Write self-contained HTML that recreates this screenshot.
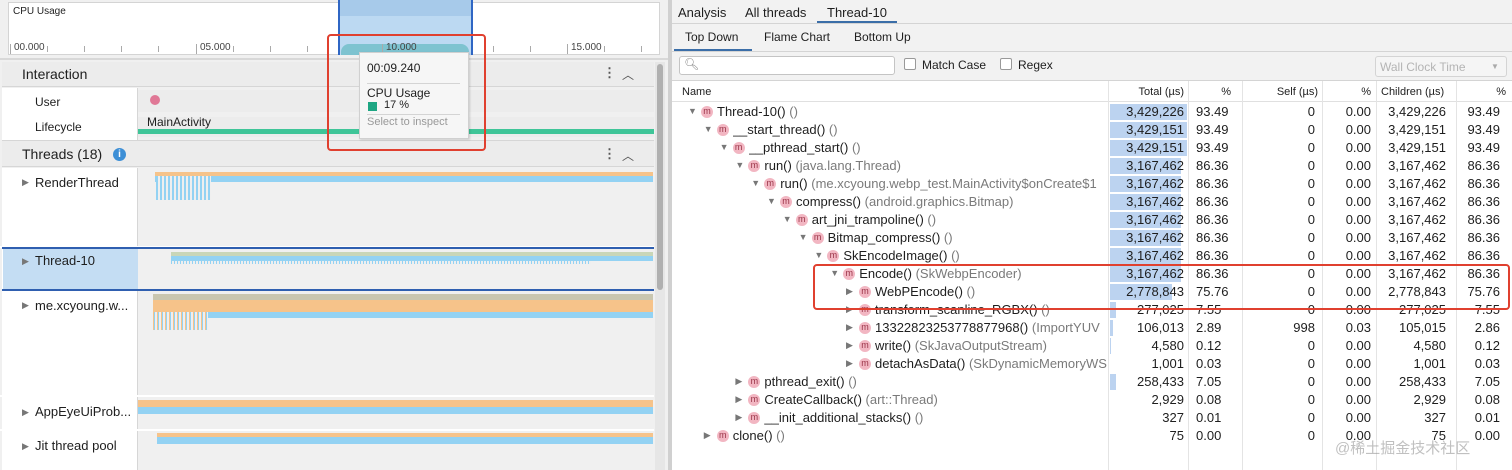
<!DOCTYPE html>
<html><head><meta charset="utf-8"><style>
*{margin:0;padding:0;box-sizing:border-box}
body{width:1512px;height:470px;overflow:hidden;background:#f2f2f2;font-family:"Liberation Sans",Arial,sans-serif;font-size:13px;color:#1e1e1e;position:relative}
.a{position:absolute}
.t{position:absolute;white-space:nowrap}
.r{position:absolute;white-space:nowrap;text-align:right}
.m{position:absolute;width:12px;height:12px;border-radius:50%;background:#f2b6c2;color:#9a3448;font-size:9px;line-height:11px;text-align:center}
.ar{position:absolute;font-size:9px;color:#777}
.g{color:#7a7a7a}
.tl{position:absolute;width:1px;height:6px;background:#aaa;top:46px}
</style></head><body>

<div class="a" style="left:0;top:0;width:668px;height:470px;background:#f0f0f0"></div>
<div class="a" style="left:8px;top:2px;width:652px;height:53px;background:#fff;border:1px solid #d4d4d4"></div>
<div class="t" style="left:13px;top:6px;font-size:10px">CPU Usage</div>
<div class="a" style="left:338px;top:0;width:135px;height:55px;background:#bcd9f2"></div>
<div class="a" style="left:338px;top:0;width:135px;height:16px;background:#a7caea"></div>
<div class="a" style="left:338px;top:0;width:2px;height:55px;background:#2f66c4"></div>
<div class="a" style="left:471px;top:0;width:2px;height:55px;background:#2f66c4"></div>
<div class="a" style="left:341px;top:44px;width:128px;height:11px;background:#7ec3d0;border-radius:8px 8px 0 0"></div>
<div class="t" style="left:14px;top:42px;font-size:10px;color:#444">00.000</div>
<div class="t" style="left:200px;top:42px;font-size:10px;color:#444">05.000</div>
<div class="t" style="left:386px;top:42px;font-size:10px;color:#444">10.000</div>
<div class="t" style="left:571px;top:42px;font-size:10px;color:#444">15.000</div>
<div class="tl" style="left:10px;height:10px;top:44px"></div><div class="tl" style="left:47px"></div><div class="tl" style="left:84px"></div><div class="tl" style="left:121px"></div><div class="tl" style="left:158px"></div><div class="tl" style="left:196px;height:10px;top:44px"></div><div class="tl" style="left:233px"></div><div class="tl" style="left:270px"></div><div class="tl" style="left:307px"></div><div class="tl" style="left:382px;height:10px;top:44px"></div><div class="tl" style="left:493px"></div><div class="tl" style="left:530px"></div><div class="tl" style="left:567px;height:10px;top:44px"></div><div class="tl" style="left:604px"></div><div class="tl" style="left:641px"></div>
<div class="a" style="left:0;top:58px;width:668px;height:2px;background:#d8d8d8"></div>

<div class="a" style="left:2px;top:62px;width:652px;height:25px;background:#ececec;border-bottom:1px solid #d6d6d6"></div>
<div class="t" style="left:22px;top:66px;font-size:14px">Interaction</div>
<div class="t" style="left:603px;top:65px;font-size:13px;font-weight:bold;color:#555">⋮</div>
<div class="t" style="left:622px;top:66px;font-size:12px;color:#555">︿</div>
<div class="a" style="left:2px;top:88px;width:136px;height:52px;background:#fff"></div>
<div class="a" style="left:137px;top:88px;width:1px;height:52px;background:#d6d6d6"></div>
<div class="a" style="left:138px;top:90px;width:516px;height:22px;background:#ececec"></div>
<div class="a" style="left:138px;top:117px;width:516px;height:20px;background:#ececec"></div>
<div class="t" style="left:35px;top:95px;font-size:12px">User</div>
<div class="t" style="left:35px;top:120px;font-size:12px">Lifecycle</div>
<div class="a" style="left:150px;top:95px;width:10px;height:10px;border-radius:50%;background:#e07896"></div>
<div class="t" style="left:147px;top:115px;font-size:12px">MainActivity</div>
<div class="a" style="left:138px;top:129px;width:516px;height:5px;background:#3fc598"></div>
<div class="a" style="left:2px;top:140px;width:652px;height:1px;background:#d6d6d6"></div>

<div class="a" style="left:2px;top:141px;width:652px;height:26px;background:#ececec;border-bottom:1px solid #d6d6d6"></div>
<div class="t" style="left:22px;top:146px;font-size:14px">Threads (18)</div>
<div class="a" style="left:113px;top:148px;width:13px;height:13px;border-radius:50%;background:#3d8fd6;color:#fff;font-size:10px;font-weight:bold;text-align:center;line-height:13px">i</div>
<div class="t" style="left:603px;top:146px;font-size:13px;font-weight:bold;color:#555">⋮</div>
<div class="t" style="left:622px;top:147px;font-size:12px;color:#555">︿</div>
<div class="a" style="left:2px;top:168px;width:136px;height:302px;background:#fff"></div>
<div class="a" style="left:137px;top:168px;width:1px;height:302px;background:#d6d6d6"></div>

<div class="ar" style="left:22px;top:177px">▶</div><div class="t" style="left:35px;top:175px">RenderThread</div>
<div class="a" style="left:155px;top:172px;width:498px;height:4px;background:#f6c38a"></div>
<div class="a" style="left:155px;top:176px;width:498px;height:6px;background:#93d2f3"></div>
<div class="a" style="left:156px;top:176px;width:55px;height:24px;background:repeating-linear-gradient(90deg,#93d2f3 0 2px,#efefef 2px 4px)"></div>
<div class="a" style="left:0;top:246px;width:654px;height:2px;background:#fff"></div>
<div class="a" style="left:2px;top:247px;width:652px;height:44px;border-top:2px solid #2f5fb0;border-bottom:2px solid #2f5fb0"></div>
<div class="a" style="left:3px;top:249px;width:135px;height:40px;background:#c4ddf3"></div>
<div class="ar" style="left:22px;top:256px">▶</div><div class="t" style="left:35px;top:253px">Thread-10</div>
<div class="a" style="left:171px;top:252px;width:482px;height:4px;background:#c9d6b8"></div>
<div class="a" style="left:171px;top:256px;width:482px;height:5px;background:#93d2f3"></div>
<div class="a" style="left:171px;top:261px;width:420px;height:3px;background:repeating-linear-gradient(90deg,#93d2f3 0 1px,#efefef 1px 3px)"></div>
<div class="ar" style="left:22px;top:300px">▶</div><div class="t" style="left:35px;top:298px">me.xcyoung.w...</div>
<div class="a" style="left:153px;top:294px;width:500px;height:6px;background:#c9c6b0"></div>
<div class="a" style="left:153px;top:300px;width:500px;height:12px;background:#f6c38a"></div>
<div class="a" style="left:153px;top:312px;width:500px;height:6px;background:#93d2f3"></div>
<div class="a" style="left:153px;top:312px;width:55px;height:18px;background:repeating-linear-gradient(90deg,#f6c38a 0 1px,#93d2f3 1px 2px,#efefef 2px 4px)"></div>
<div class="a" style="left:0;top:395px;width:654px;height:2px;background:#fff"></div>
<div class="ar" style="left:22px;top:407px">▶</div><div class="t" style="left:35px;top:404px">AppEyeUiProb...</div>
<div class="a" style="left:138px;top:400px;width:515px;height:7px;background:#f6c38a"></div>
<div class="a" style="left:138px;top:407px;width:515px;height:7px;background:#93d2f3"></div>
<div class="a" style="left:0;top:429px;width:654px;height:2px;background:#fff"></div>
<div class="ar" style="left:22px;top:441px">▶</div><div class="t" style="left:35px;top:438px">Jit thread pool</div>
<div class="a" style="left:157px;top:433px;width:496px;height:4px;background:#f6c38a"></div>
<div class="a" style="left:157px;top:437px;width:496px;height:7px;background:#93d2f3"></div>

<div class="a" style="left:655px;top:62px;width:10px;height:408px;background:#e6e6e6"></div>
<div class="a" style="left:657px;top:64px;width:6px;height:226px;background:#b0b0b0;border-radius:3px"></div>

<div class="a" style="left:359px;top:52px;width:110px;height:87px;background:#f6f6f6;border:1px solid #d0d0d0;box-shadow:1px 1px 2px rgba(0,0,0,.15)"></div>
<div class="t" style="left:367px;top:61px;font-size:12px">00:09.240</div>
<div class="a" style="left:367px;top:83px;width:93px;height:1px;background:#d4d4d4"></div>
<div class="t" style="left:367px;top:86px;font-size:12px">CPU Usage</div>
<div class="a" style="left:368px;top:102px;width:9px;height:9px;background:#1ea683"></div>
<div class="t" style="left:384px;top:99px;font-size:11px">17 %</div>
<div class="a" style="left:367px;top:114px;width:93px;height:1px;background:#d4d4d4"></div>
<div class="t" style="left:367px;top:116px;font-size:11px;color:#999">Select to inspect</div>
<div class="a" style="left:327px;top:34px;width:159px;height:117px;border:2px solid #e0402f;border-radius:4px"></div>

<div class="a" style="left:668px;top:0;width:4px;height:470px;background:#d0d0d0"></div>

<div class="a" style="left:672px;top:0;width:840px;height:470px;background:#f2f2f2"></div>
<div class="t" style="left:678px;top:5px;font-size:13px">Analysis</div>
<div class="t" style="left:745px;top:5px;font-size:13px">All threads</div>
<div class="t" style="left:827px;top:5px;font-size:13px">Thread-10</div>
<div class="a" style="left:817px;top:21px;width:80px;height:2px;background:#3b6ea8"></div>
<div class="a" style="left:672px;top:23px;width:840px;height:1px;background:#d4d4d4"></div>
<div class="t" style="left:685px;top:30px;font-size:12px">Top Down</div>
<div class="t" style="left:764px;top:30px;font-size:12px">Flame Chart</div>
<div class="t" style="left:854px;top:30px;font-size:12px">Bottom Up</div>
<div class="a" style="left:674px;top:49px;width:78px;height:2px;background:#3b6ea8"></div>
<div class="a" style="left:672px;top:51px;width:840px;height:1px;background:#d4d4d4"></div>
<div class="a" style="left:679px;top:56px;width:216px;height:19px;background:#fff;border:1px solid #c4c4c4;border-radius:3px"></div>
<div class="t" style="left:684px;top:57px;font-size:12px;color:#888">🔍︎</div>
<div class="a" style="left:904px;top:58px;width:12px;height:12px;background:#fff;border:1px solid #999;border-radius:2px"></div>
<div class="t" style="left:922px;top:58px;font-size:12px">Match Case</div>
<div class="a" style="left:1000px;top:58px;width:12px;height:12px;background:#fff;border:1px solid #999;border-radius:2px"></div>
<div class="t" style="left:1018px;top:58px;font-size:12px">Regex</div>
<div class="a" style="left:1375px;top:56px;width:132px;height:21px;background:#f5f5f5;border:1px solid #d4d4d4;border-radius:3px"></div>
<div class="t" style="left:1380px;top:60px;font-size:12px;color:#b4b4b4">Wall Clock Time</div>
<div class="t" style="left:1491px;top:62px;font-size:8px;color:#aaa">▼</div>
<div class="a" style="left:672px;top:80px;width:840px;height:1px;background:#d4d4d4"></div>

<div class="a" style="left:672px;top:81px;width:840px;height:389px;background:#fff"></div>
<div class="a" style="left:672px;top:81px;width:840px;height:21px;border-bottom:1px solid #e0e0e0"></div>
<div class="a" style="left:1108px;top:81px;width:1px;height:389px;background:#e4e4e4"></div>
<div class="a" style="left:1188px;top:81px;width:1px;height:389px;background:#e4e4e4"></div>
<div class="a" style="left:1242px;top:81px;width:1px;height:389px;background:#e4e4e4"></div>
<div class="a" style="left:1322px;top:81px;width:1px;height:389px;background:#e4e4e4"></div>
<div class="a" style="left:1376px;top:81px;width:1px;height:389px;background:#e4e4e4"></div>
<div class="a" style="left:1456px;top:81px;width:1px;height:389px;background:#e4e4e4"></div>
<div class="t" style="left:682px;top:86px;font-size:11px">Name</div>
<div class="r" style="right:328px;top:86px;font-size:11px">Total (µs)</div>
<div class="r" style="right:281px;top:86px;font-size:11px">%</div>
<div class="r" style="right:194px;top:86px;font-size:11px">Self (µs)</div>
<div class="r" style="right:141px;top:86px;font-size:11px">%</div>
<div class="t" style="left:1381px;top:86px;font-size:11px">Children (µs)</div>
<div class="r" style="right:6px;top:86px;font-size:11px">%</div>

<div id="rows"></div>
<script>
var R=[
[0,1,"Thread-10()","()",3429226,"3,429,226","93.49","0","0.00","3,429,226","93.49"],
[1,1,"__start_thread()","()",3429151,"3,429,151","93.49","0","0.00","3,429,151","93.49"],
[2,1,"__pthread_start()","()",3429151,"3,429,151","93.49","0","0.00","3,429,151","93.49"],
[3,1,"run()","(java.lang.Thread)",3167462,"3,167,462","86.36","0","0.00","3,167,462","86.36"],
[4,1,"run()","(me.xcyoung.webp_test.MainActivity$onCreate$1",3167462,"3,167,462","86.36","0","0.00","3,167,462","86.36"],
[5,1,"compress()","(android.graphics.Bitmap)",3167462,"3,167,462","86.36","0","0.00","3,167,462","86.36"],
[6,1,"art_jni_trampoline()","()",3167462,"3,167,462","86.36","0","0.00","3,167,462","86.36"],
[7,1,"Bitmap_compress()","()",3167462,"3,167,462","86.36","0","0.00","3,167,462","86.36"],
[8,1,"SkEncodeImage()","()",3167462,"3,167,462","86.36","0","0.00","3,167,462","86.36"],
[9,1,"Encode()","(SkWebpEncoder)",3167462,"3,167,462","86.36","0","0.00","3,167,462","86.36"],
[10,0,"WebPEncode()","()",2778843,"2,778,843","75.76","0","0.00","2,778,843","75.76"],
[10,0,"transform_scanline_RGBX()","()",277025,"277,025","7.55","0","0.00","277,025","7.55"],
[10,0,"13322823253778877968()","(ImportYUV",106013,"106,013","2.89","998","0.03","105,015","2.86"],
[10,0,"write()","(SkJavaOutputStream)",4580,"4,580","0.12","0","0.00","4,580","0.12"],
[10,0,"detachAsData()","(SkDynamicMemoryWS",1001,"1,001","0.03","0","0.00","1,001","0.03"],
[3,0,"pthread_exit()","()",258433,"258,433","7.05","0","0.00","258,433","7.05"],
[3,0,"CreateCallback()","(art::Thread)",2929,"2,929","0.08","0","0.00","2,929","0.08"],
[3,0,"__init_additional_stacks()","()",327,"327","0.01","0","0.00","327","0.01"],
[1,0,"clone()","()",75,"75","0.00","0","0.00","75","0.00"]];
var h="";
R.forEach(function(r,i){var y=103+i*18,x=688+r[0]*15.8;
var bw=Math.max(r[4]/3429226*77,r[4]>100000?3:0);
if(bw>0)h+='<div class="a" style="left:1110px;top:'+(y+1)+'px;width:'+bw+'px;height:16px;background:#bcd3f0"></div>';
h+='<div class="ar" style="left:'+x+'px;top:'+(y+3)+'px">'+(r[1]?'▼':'▶')+'</div>';
h+='<div class="m" style="left:'+(x+13)+'px;top:'+(y+3)+'px">m</div>';
h+='<div class="t" style="left:'+(x+29)+'px;top:'+(y+1)+'px;max-width:'+(1107-x-29)+'px;overflow:hidden">'+r[2]+' <span class="g">'+r[3]+'</span></div>';
h+='<div class="r" style="right:328px;top:'+(y+1)+'px">'+r[5]+'</div>';
h+='<div class="t" style="left:1196px;top:'+(y+1)+'px">'+r[6]+'</div>';
h+='<div class="r" style="right:197px;top:'+(y+1)+'px">'+r[7]+'</div>';
h+='<div class="r" style="right:141px;top:'+(y+1)+'px">'+r[8]+'</div>';
h+='<div class="r" style="right:66px;top:'+(y+1)+'px">'+r[9]+'</div>';
h+='<div class="r" style="right:12px;top:'+(y+1)+'px">'+r[10]+'</div>';});
document.getElementById("rows").innerHTML=h;
</script>
<div class="a" style="left:813px;top:264px;width:697px;height:46px;border:2px solid #e0402f;border-radius:4px"></div>
<div class="t" style="left:1335px;top:437px;font-size:15px;color:rgba(150,150,150,.6);font-family:'Liberation Sans','Noto Sans CJK SC',sans-serif">@稀土掘金技术社区</div>
</body></html>
